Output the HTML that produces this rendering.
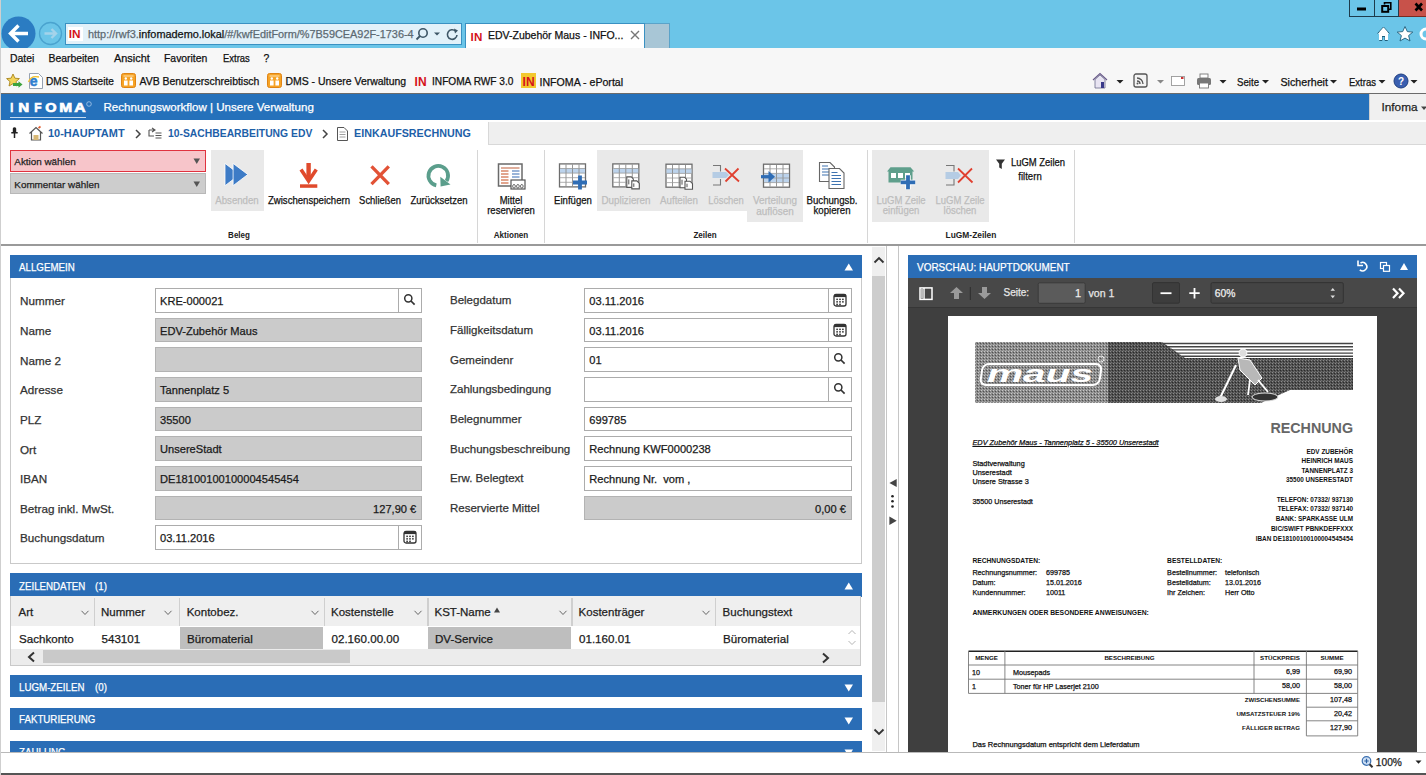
<!DOCTYPE html>
<html><head><meta charset="utf-8">
<style>
*{box-sizing:border-box;margin:0;padding:0}
html,body{width:1426px;height:775px;overflow:hidden;background:#fff}
body{position:relative;font-family:"Liberation Sans",sans-serif;color:#222}
.a{position:absolute}
.t{position:absolute;white-space:nowrap;line-height:1;-webkit-text-stroke:0.25px currentColor}
.t[style*="bold"]{-webkit-text-stroke:0}
svg{position:absolute;overflow:visible}
</style></head><body>

<!-- TITLE BAR -->
<div class="a" style="left:0;top:0;width:1426px;height:48px;background:#6bc5e8"></div>
<svg style="left:0;top:0" width="90" height="48">
  <clipPath id="cb"><rect x="0" y="0" width="90" height="48"/></clipPath>
  <g clip-path="url(#cb)">
  <circle cx="18.5" cy="33.5" r="17" fill="#2b7cc2"/>
  <path d="M11 33.5 H28 M18.5 25.5 L10.5 33.5 L18.5 41.5" stroke="#fff" stroke-width="3.4" fill="none" stroke-linejoin="miter"/>
  <circle cx="50.5" cy="33.5" r="11" fill="none" stroke="#4aa3cf" stroke-width="1.3"/>
  <path d="M44.5 33.5 H56 M51.5 29 L56 33.5 L51.5 38" stroke="#a4d3ea" stroke-width="2.4" fill="none"/>
  </g>
</svg>
<div class="a" style="left:65px;top:23px;width:397px;height:22px;background:#e2f1f9;border:1px solid #3a91c2"></div>
<div class="a" style="left:68px;top:27px;width:15px;height:14px;background:#fff"></div>
<div class="t" style="left:68.8px;top:29px;font-size:11.8px;font-weight:bold;color:#d5121a;letter-spacing:0px">IN</div>
<div class="t" style="left:88px;top:29px;font-size:10.9px;color:#5d6a72">http://rwf3.<span style="color:#111">infomademo.lokal</span>/#/kwfEditForm/%7B59CEA92F-1736-4</div>
<svg style="left:415px;top:27px" width="46" height="16">
  <circle cx="8" cy="6" r="4.2" fill="none" stroke="#3d5666" stroke-width="1.6"/>
  <path d="M5 9 L1.5 12.5" stroke="#3d5666" stroke-width="1.8"/>
  <path d="M19 5.5 L25 5.5 L22 8.5 Z" fill="#3d5666"/>
  <path d="M40.5 4 A4.8 4.8 0 1 0 42 8" stroke="#3d5666" stroke-width="1.6" fill="none"/>
  <path d="M39 1.5 L43 3.5 L40 6.5 Z" fill="#3d5666"/>
</svg>
<div class="a" style="left:465px;top:23px;width:180px;height:25px;background:#fff;border:1px solid #3a91c2;border-bottom:none"></div>
<div class="a" style="left:645px;top:23px;width:25px;height:25px;background:#a8c6d6;border:1px solid #5aa3c9;border-bottom:none;border-left:none"></div>
<div class="t" style="left:470.5px;top:30.5px;font-size:11.6px;font-weight:bold;color:#d5121a;letter-spacing:0.2px">IN</div>
<div class="t" style="left:488px;top:30px;font-size:10.5px;color:#111">EDV-Zubehör Maus - INFO...</div>
<svg style="left:630px;top:30px" width="10" height="10"><path d="M1 1 L9 9 M9 1 L1 9" stroke="#777" stroke-width="1.4"/></svg>
<!-- window buttons -->
<div class="a" style="left:1349px;top:0;width:50px;height:17px;border:1px solid #1d3b4c;border-top:none;background:#6bc5e8"></div>
<div class="a" style="left:1374px;top:0;width:1px;height:16px;background:#1d3b4c"></div>
<div class="a" style="left:1399px;top:0;width:27px;height:17px;background:#c8524a;border-bottom:1px solid #7a2a20"></div>
<svg style="left:1349px;top:0" width="77" height="17">
  <rect x="8" y="7.5" width="9" height="3" fill="#000"/>
  <path d="M35.5 4.5 V2.8 H41.8 V9.2 H39.5" stroke="#000" stroke-width="1.6" fill="none"/>
  <rect x="33.2" y="6" width="6" height="5.8" fill="none" stroke="#000" stroke-width="2"/>
  <path d="M66.5 3.5 L73 10.5 M73 3.5 L66.5 10.5" stroke="#000" stroke-width="2.6"/>
</svg>
<svg style="left:1375px;top:25px" width="51" height="18">
  <path d="M2.5 8.5 L8.5 2 L14.5 8.5 M4.5 7 V15.5 H7 V11.5 H10 V15.5 H12.5 V7" fill="#fff" stroke="#1f5d7a" stroke-width="1"/>
  <path d="M8.5 2.5 L4 7.5 V15 H7 V11 H10 V15 H13 V7.5 Z" fill="#fff"/>
  <path d="M30 1.5 L32.3 6.6 L37.8 7.1 L33.6 10.6 L35 16 L30 13.1 L25 16 L26.4 10.6 L22.2 7.1 L27.7 6.6 Z" fill="#fff" stroke="#1f5d7a" stroke-width="0.9"/>
  <circle cx="51" cy="9" r="5" fill="none" stroke="#fff" stroke-width="3"/>
</svg>
<div class="a" style="left:0;top:0;width:1px;height:775px;background:#cfcfcf;z-index:50"></div>

<!-- MENU + FAVORITES -->
<div class="a" style="left:0;top:48px;width:1426px;height:45px;background:#f7f7f7"></div>
<div class="a" style="left:0;top:93px;width:1426px;height:1px;background:#6b6b6b"></div>
<div class="t" style="left:10px;top:54px;font-size:10.4px;color:#111">Datei</div>
<div class="t" style="left:48.5px;top:54px;font-size:10.4px;color:#111">Bearbeiten</div>
<div class="t" style="left:113.5px;top:53px;font-size:10.5px;color:#111;transform:scaleX(1.04);transform-origin:0 0">Ansicht</div>
<div class="t" style="left:164px;top:54px;font-size:10.4px;color:#111">Favoriten</div>
<div class="t" style="left:222.5px;top:53px;font-size:10.5px;color:#111;transform:scaleX(0.90);transform-origin:0 0">Extras</div>
<div class="t" style="left:263.5px;top:54px;font-size:10.4px;color:#111">?</div>
<!-- favorites -->
<svg style="left:5px;top:72px" width="20" height="18">
  <path d="M8 2 L9.9 6.2 L14.4 6.6 L11 9.6 L12 14 L8 11.7 L4 14 L5 9.6 L1.6 6.6 L6.1 6.2 Z" fill="#f3d45a" stroke="#a8841c" stroke-width="0.9"/>
  <path d="M8 12.5 H14.5" stroke="#3ea33e" stroke-width="3"/><path d="M13.5 9.3 L17.5 12.5 L13.5 15.7 Z" fill="#3ea33e"/>
</svg>
<svg style="left:28px;top:73px" width="16" height="17">
  <path d="M1.5 0.5 H10.5 L14.5 4.5 V15.5 H1.5 Z" fill="#fff" stroke="#8a96a8" stroke-width="0.9"/>
  <text x="1.8" y="12.8" font-family="Liberation Sans" font-weight="bold" font-size="14" fill="#2f7fd0" stroke="#2f7fd0" stroke-width="0.5">e</text>
  <path d="M0.5 9 Q3 2 11 4" stroke="#f2c12e" stroke-width="1.3" fill="none"/>
</svg>
<div class="t" style="left:46px;top:76.5px;font-size:10.1px;color:#111">DMS Startseite</div>
<svg style="left:121px;top:73px" width="16" height="16">
  <rect x="0.5" y="0.5" width="14" height="14" rx="2" fill="#f6a326" stroke="#e08414" stroke-width="1"/>
  <rect x="2.5" y="2.5" width="10" height="1" fill="#fde2b0"/>
  <circle cx="4.8" cy="5.5" r="1.2" fill="#fff"/><circle cx="10.2" cy="5.5" r="1.2" fill="#fff"/>
  <rect x="3" y="7.5" width="3.6" height="5" fill="#fff"/><rect x="8.4" y="7.5" width="3.6" height="5" fill="#fff"/>
</svg>
<div class="t" style="left:139.5px;top:76.5px;font-size:10.45px;color:#111">AVB Benutzerschreibtisch</div>
<svg style="left:267px;top:73px" width="16" height="16">
  <rect x="0.5" y="0.5" width="14" height="14" rx="2" fill="#f6a326" stroke="#e08414" stroke-width="1"/>
  <rect x="2.5" y="2.5" width="10" height="1" fill="#fde2b0"/>
  <circle cx="4.8" cy="5.5" r="1.2" fill="#fff"/><circle cx="10.2" cy="5.5" r="1.2" fill="#fff"/>
  <rect x="3" y="7.5" width="3.6" height="5" fill="#fff"/><rect x="8.4" y="7.5" width="3.6" height="5" fill="#fff"/>
</svg>
<div class="t" style="left:285.5px;top:76.5px;font-size:10.45px;color:#111">DMS - Unsere Verwaltung</div>
<div class="t" style="left:414.5px;top:76px;font-size:12px;font-weight:bold;color:#d5121a;letter-spacing:0.2px">IN</div>
<div class="t" style="left:432px;top:76.5px;font-size:10.13px;color:#111">INFOMA RWF 3.0</div>
<div class="a" style="left:521px;top:73px;width:15px;height:15px;background:#f3c82e"></div>
<div class="t" style="left:522.5px;top:76px;font-size:12px;font-weight:bold;color:#d5121a;letter-spacing:0.2px">IN</div>
<div class="t" style="left:539.5px;top:76.5px;font-size:10.6px;color:#111">INFOMA - ePortal</div>
<!-- right command bar -->
<svg style="left:1092px;top:72px" width="330" height="18">
  <path d="M1 8 L8 1.5 L15 8" fill="none" stroke="#6a5a8a" stroke-width="1.2"/>
  <path d="M3 7.5 V16 H13 V7.5 L8 3 Z" fill="#e8e4f2" stroke="#6a6a8a" stroke-width="0.8"/>
  <rect x="9" y="10" width="3" height="6" fill="#3a3a8a"/>
  <path d="M24.5 8 H31.5 L28 11.5 Z" fill="#222"/>
  <rect x="42" y="2" width="13" height="13" rx="2" fill="#f3f3f3" stroke="#555" stroke-width="1.3"/>
  <path d="M45 6 A6 6 0 0 1 51 12 M45 9 A3 3 0 0 1 48 12" stroke="#555" stroke-width="1.3" fill="none"/><circle cx="45.5" cy="11.5" r="1" fill="#555"/>
  <path d="M65 8 H72 L68.5 11.5 Z" fill="#888"/>
  <rect x="79.5" y="4.5" width="13" height="9" fill="#fff" stroke="#999" stroke-width="0.9"/>
  <rect x="89" y="5" width="2.5" height="2" fill="#c33"/>
  <rect x="105" y="6" width="14" height="7" rx="1.5" fill="#777"/>
  <rect x="108" y="2" width="8" height="4" fill="#fff" stroke="#777" stroke-width="0.9"/>
  <rect x="107.5" y="11" width="9" height="5" fill="#fff" stroke="#777" stroke-width="0.9"/>
  <path d="M127.5 8 H134.5 L131 11.5 Z" fill="#222"/>
  <path d="M170 8 H177 L173.5 11.5 Z" fill="#222"/>
  <path d="M238 8 H245 L241.5 11.5 Z" fill="#222"/>
  <path d="M286.5 8 H293.5 L290 11.5 Z" fill="#222"/>
  <circle cx="309" cy="9" r="7" fill="#3a5fb0" stroke="#1f3f80" stroke-width="1"/>
  <text x="309" y="13" font-family="Liberation Sans" font-weight="bold" font-size="10" fill="#fff" text-anchor="middle">?</text>
  <path d="M318.5 8 H325.5 L322 11.5 Z" fill="#222"/>
</svg>
<div class="t" style="left:1237px;top:76.5px;font-size:10.5px;color:#111;transform:scaleX(0.92);transform-origin:0 0">Seite</div>
<div class="t" style="left:1280.5px;top:76.5px;font-size:10.66px;color:#111">Sicherheit</div>
<div class="t" style="left:1349px;top:76.5px;font-size:10.5px;color:#111;transform:scaleX(0.906);transform-origin:0 0">Extras</div>

<!-- APP HEADER -->
<div class="a" style="left:0;top:94px;width:1426px;height:26px;background:#2571bb"></div>
<svg style="left:0;top:94px" width="100" height="26"><text x="10.35" y="18.4" font-family="Liberation Sans" font-weight="bold" font-size="13" fill="#fff" stroke="#fff" stroke-width="0.7" textLength="3.0" lengthAdjust="spacingAndGlyphs">I</text><text x="18.25" y="18.4" font-family="Liberation Sans" font-weight="bold" font-size="13" fill="#fff" stroke="#fff" stroke-width="0.7" textLength="10.9" lengthAdjust="spacingAndGlyphs">N</text><text x="34.35" y="18.4" font-family="Liberation Sans" font-weight="bold" font-size="13" fill="#fff" stroke="#fff" stroke-width="0.7" textLength="7.3" lengthAdjust="spacingAndGlyphs">F</text><text x="45.35" y="18.4" font-family="Liberation Sans" font-weight="bold" font-size="13" fill="#fff" stroke="#fff" stroke-width="0.7" textLength="11.3" lengthAdjust="spacingAndGlyphs">O</text><text x="59.35" y="18.4" font-family="Liberation Sans" font-weight="bold" font-size="13" fill="#fff" stroke="#fff" stroke-width="0.7" textLength="12.9" lengthAdjust="spacingAndGlyphs">M</text><text x="74.35" y="18.4" font-family="Liberation Sans" font-weight="bold" font-size="13" fill="#fff" stroke="#fff" stroke-width="0.7" textLength="11.3" lengthAdjust="spacingAndGlyphs">A</text></svg>
<div class="a" style="left:10px;top:116.5px;width:76px;height:1.5px;background:#c5dbf0"></div>
<svg style="left:86px;top:101px" width="7" height="7"><circle cx="3" cy="3" r="2.3" fill="none" stroke="#a8c8ea" stroke-width="0.8"/></svg>
<div class="t" style="left:103.5px;top:102px;font-size:11.55px;color:#fff">Rechnungsworkflow | Unsere Verwaltung</div>
<div class="a" style="left:1369px;top:94px;width:57px;height:27px;background:#f0f0f0;border-left:1px solid #d0d0d0"></div>
<div class="t" style="left:1381.5px;top:102px;font-size:11.8px;color:#222">Infoma</div>
<svg style="left:1421px;top:106px" width="6" height="5"><path d="M0 0.5 H6 L3 4 Z" fill="#444"/></svg>

<!-- BREADCRUMB -->
<div class="a" style="left:0;top:120px;width:1426px;height:25px;background:#fff"></div>
<div class="a" style="left:488px;top:122px;width:938px;height:23px;background:#efefef;border-left:1px solid #d8d8d8;border-bottom:1px solid #d8d8d8"></div>
<svg style="left:9px;top:126px" width="480" height="16">
  <path d="M3.8 2.5 A1.8 1.8 0 0 1 7.2 2.5 V6 H3.8 Z" fill="#222"/><path d="M2.3 6.8 H8.7 M5.5 6.8 V12" stroke="#222" stroke-width="1.5" fill="none"/>
  <path d="M20.5 7.5 L27 1.5 L33.5 7.5 M22.5 6 V14 H31.5 V6" fill="none" stroke="#555" stroke-width="1.2"/>
  <rect x="24.5" y="9" width="5" height="5" fill="#d8b875"/>
  <path d="M29.5 2 L31.5 0.5" stroke="#e05a2a" stroke-width="1.6"/>
  <path d="M127 4 L131 8 L127 12" stroke="#444" stroke-width="1.5" fill="none"/>
  <path d="M140 4 H146 M140 4 V10 H145 M143 2 L146 4 L143 6" stroke="#555" stroke-width="1.1" fill="none"/>
  <path d="M146.5 7 H152.5 M146.5 9.5 H152.5 M146.5 12 H152.5" stroke="#555" stroke-width="1.1"/>
  <path d="M314 4 L318 8 L314 12" stroke="#444" stroke-width="1.5" fill="none"/>
  <path d="M328.5 1.5 H335 L338.5 5 V14.5 H328.5 Z" fill="#fff" stroke="#555" stroke-width="1"/>
  <path d="M330.5 6 H336.5 M330.5 8.5 H336.5 M330.5 11 H336.5" stroke="#888" stroke-width="0.8"/>
</svg>
<div class="t" style="left:48.4px;top:128.1px;font-size:11.8px;font-weight:bold;color:#1d60a8;transform:scaleX(0.93);transform-origin:0 0">10-HAUPTAMT</div>
<div class="t" style="left:167.6px;top:128.1px;font-size:11.8px;font-weight:bold;color:#1d60a8;transform:scaleX(0.877);transform-origin:0 0">10-SACHBEARBEITUNG EDV</div>
<div class="t" style="left:354px;top:128.1px;font-size:11.8px;font-weight:bold;color:#1d60a8;transform:scaleX(0.91);transform-origin:0 0">EINKAUFSRECHNUNG</div>

<!-- RIBBON -->
<div class="a" style="left:0;top:145px;width:1426px;height:100px;background:#fff"></div>
<div class="a" style="left:0;top:244px;width:1426px;height:2px;background:#9a9a9a"></div>
<div class="a" style="left:10px;top:150px;width:196px;height:22px;background:#f7c5ca;border:1px solid #e0333f"></div>
<div class="t" style="left:14.3px;top:157px;font-size:9.9px;color:#222">Aktion wählen</div>
<svg style="left:193px;top:158px" width="8" height="7"><path d="M0.5 0.5 H7 L3.75 6 Z" fill="#555"/></svg>
<div class="a" style="left:10px;top:173px;width:196px;height:21px;background:#cdcdcd;border:1px solid #b8b8b8"></div>
<div class="t" style="left:14.3px;top:179.5px;font-size:9.9px;color:#222">Kommentar wählen</div>
<svg style="left:193px;top:180.5px" width="8" height="7"><path d="M0.5 0.5 H7 L3.75 6 Z" fill="#555"/></svg>

<div class="a" style="left:211px;top:150px;width:53px;height:61px;background:#e9e9e9"></div>
<div class="a" style="left:597px;top:150px;width:150px;height:61px;background:#e9e9e9"></div>
<div class="a" style="left:747px;top:150px;width:56px;height:72px;background:#e9e9e9"></div>
<div class="a" style="left:872px;top:150px;width:117px;height:72px;background:#e9e9e9"></div>
<div class="a" style="left:477px;top:150px;width:1px;height:93px;background:#d6d6d6"></div>
<div class="a" style="left:544px;top:150px;width:1px;height:93px;background:#d6d6d6"></div>
<div class="a" style="left:867px;top:150px;width:1px;height:93px;background:#d6d6d6"></div>
<div class="a" style="left:1074px;top:150px;width:1px;height:93px;background:#d6d6d6"></div>

<svg style="left:0;top:0" width="1100" height="245">
  <path d="M225 163.4 V185.7 L239.7 174.5 Z" fill="#3d7bc6" stroke="#fff" stroke-width="0.8"/>
  <path d="M233.1 163.4 V185.7 L247.8 174.5 Z" fill="#3d7bc6" stroke="#fff" stroke-width="0.8"/>
  <path d="M308.6 163 V180" stroke="#e04a2c" stroke-width="4.4"/>
  <path d="M301 169.5 L308.6 181 L316.3 169.5" stroke="#e04a2c" stroke-width="3.6" fill="none"/>
  <rect x="300" y="184.3" width="17.3" height="3.5" fill="#e04a2c"/>
  <path d="M371.5 166.3 L388.8 184.2 M388.8 166.3 L371.5 184.2" stroke="#e25236" stroke-width="3.3"/>
  <path d="M436.3 185.3 A9.8 9.8 0 1 1 446.5 181" stroke="#5b9e8c" stroke-width="3.8" fill="none"/>
  <path d="M440.3 176.7 L440.6 186.6 L450.5 184.6 Z" fill="#5b9e8c"/>
  <rect x="498.5" y="164" width="23.5" height="22" fill="#fff" stroke="#6a6a6a" stroke-width="1.5"/>
  <path d="M501 168 H519.5" stroke="#d08a70" stroke-width="1.4"/>
  <path d="M501 171 H508.5 M501 174 H508.5 M501 177 H508.5 M501 180 H508.5 M501 183 H508.5" stroke="#d9886a" stroke-width="1.6"/>
  <path d="M512 171 H519.5 M512 174 H519.5 M512 177 H519.5" stroke="#7a9ccc" stroke-width="1.6"/>
  <rect x="511" y="180" width="14" height="9" fill="#fff" stroke="#555" stroke-width="1.2"/>
  <path d="M514 184.5 a1.3 1.8 0 1 0 0.01 0 M517.9 184.5 a1.3 1.8 0 1 0 0.01 0 M521.8 184.5 a1.3 1.8 0 1 0 0.01 0" stroke="#444" stroke-width="0.9" fill="none"/>
  <g transform="translate(559,163.4)"><rect x="0.5" y="0.5" width="26" height="23" fill="#fff" stroke="#6d6d6d" stroke-width="1.3"/><rect x="1" y="5.1" width="25" height="4.6" fill="#bcd3ec"/><path d="M7.0 1 V23" stroke="#8a8a8a" stroke-width="0.9"/><path d="M13.5 1 V23" stroke="#8a8a8a" stroke-width="0.9"/><path d="M20.0 1 V23" stroke="#8a8a8a" stroke-width="0.9"/><path d="M1 5.1 H26" stroke="#9a9a9a" stroke-width="0.8"/><path d="M1 9.7 H26" stroke="#9a9a9a" stroke-width="0.8"/><path d="M1 14.3 H26" stroke="#9a9a9a" stroke-width="0.8"/><path d="M1 18.9 H26" stroke="#9a9a9a" stroke-width="0.8"/></g>
  <path d="M573 182.5 H587 M580 175.5 V189.5" stroke="#2f6db5" stroke-width="3.8"/>
  <g transform="translate(612.3,163.4)"><rect x="0.5" y="0.5" width="26" height="23" fill="#fff" stroke="#6d6d6d" stroke-width="1.3"/><rect x="1" y="5.1" width="25" height="4.6" fill="#bcd3ec"/><path d="M7.0 1 V23" stroke="#8a8a8a" stroke-width="0.9"/><path d="M13.5 1 V23" stroke="#8a8a8a" stroke-width="0.9"/><path d="M20.0 1 V23" stroke="#8a8a8a" stroke-width="0.9"/><path d="M1 5.1 H26" stroke="#9a9a9a" stroke-width="0.8"/><path d="M1 9.7 H26" stroke="#9a9a9a" stroke-width="0.8"/><path d="M1 14.3 H26" stroke="#9a9a9a" stroke-width="0.8"/><path d="M1 18.9 H26" stroke="#9a9a9a" stroke-width="0.8"/><path d="M14.5 13.5 H19 L21 15.5 V24 H14.5 Z" fill="#fff" stroke="#555" stroke-width="1.1"/><path d="M19.5 17.5 H24.5 L27 20 V25.5 H19.5 Z" fill="#fff" stroke="#555" stroke-width="1.1"/><path d="M16.5 16 V21 M21.5 20 V23.5" stroke="#555" stroke-width="1"/></g>
  <g transform="translate(665.5,163.7)"><rect x="0.5" y="0.5" width="26" height="23" fill="#fff" stroke="#6d6d6d" stroke-width="1.3"/><rect x="1" y="5.1" width="25" height="4.6" fill="#bcd3ec"/><path d="M7.0 1 V23" stroke="#8a8a8a" stroke-width="0.9"/><path d="M13.5 1 V23" stroke="#8a8a8a" stroke-width="0.9"/><path d="M20.0 1 V23" stroke="#8a8a8a" stroke-width="0.9"/><path d="M1 5.1 H26" stroke="#9a9a9a" stroke-width="0.8"/><path d="M1 9.7 H26" stroke="#9a9a9a" stroke-width="0.8"/><path d="M1 14.3 H26" stroke="#9a9a9a" stroke-width="0.8"/><path d="M1 18.9 H26" stroke="#9a9a9a" stroke-width="0.8"/><path d="M14.5 13.5 H19 L21 15.5 V24 H14.5 Z" fill="#fff" stroke="#555" stroke-width="1.1"/><path d="M19.5 17.5 H24.5 L27 20 V25.5 H19.5 Z" fill="#fff" stroke="#555" stroke-width="1.1"/><path d="M16.5 16 V21 M21.5 20 V23.5" stroke="#555" stroke-width="1"/></g>
  <path d="M713 165.5 H720.5 V171.5 M713 185 H720.5 V179" stroke="#777" stroke-width="1.1" fill="none"/>
  <path d="M712.5 172 H726 L729 175 L726 178 H712.5 Z" fill="#b5cce4"/>
  <path d="M725 168.5 L739 181.5 M738.5 168.5 L725.5 181.5" stroke="#e04030" stroke-width="1.8"/>
  <g transform="translate(763,163.7)"><rect x="0.5" y="0.5" width="26" height="23" fill="#fff" stroke="#6d6d6d" stroke-width="1.3"/><rect x="1" y="9.7" width="25" height="4.6" fill="#bcd3ec"/><rect x="1" y="14.3" width="25" height="4.6" fill="#bcd3ec"/><path d="M7.0 1 V23" stroke="#8a8a8a" stroke-width="0.9"/><path d="M13.5 1 V23" stroke="#8a8a8a" stroke-width="0.9"/><path d="M20.0 1 V23" stroke="#8a8a8a" stroke-width="0.9"/><path d="M1 5.1 H26" stroke="#9a9a9a" stroke-width="0.8"/><path d="M1 9.7 H26" stroke="#9a9a9a" stroke-width="0.8"/><path d="M1 14.3 H26" stroke="#9a9a9a" stroke-width="0.8"/><path d="M1 18.9 H26" stroke="#9a9a9a" stroke-width="0.8"/></g>
  <path d="M761 176.7 H770" stroke="#2f6db5" stroke-width="3.2"/><path d="M768.5 171 L775 176.7 L768.5 182.4 Z" fill="#2f6db5"/>
  <path d="M819.5 162.5 H830 L834.5 167 V181.5 H819.5 Z" fill="#fff" stroke="#666" stroke-width="1.1"/>
  <path d="M822 166 H828 M822 169 H831 M822 172 H831 M822 175 H831" stroke="#3e73b0" stroke-width="1.1"/>
  <path d="M829 168.5 H839.5 L844 173 V188.5 H829 Z" fill="#fff" stroke="#666" stroke-width="1.1"/>
  <path d="M831.5 172.5 H837.5 M831.5 175.5 H841 M831.5 178.5 H841 M831.5 181.5 H841 M831.5 184.5 H841" stroke="#3e73b0" stroke-width="1.1"/>
  <path d="M887 171.5 L890.5 167.3 H910.5 L914.2 171.5 Z" fill="#5f9f8c"/><rect x="888.5" y="171" width="24" height="11.5" fill="#5f9f8c"/>
  <rect x="891" y="173" width="5" height="5" fill="#fff"/><rect x="898" y="173" width="5" height="5" fill="#fff"/><rect x="905" y="173" width="5" height="5" fill="#fff"/>
  <path d="M900.7 182.4 H915.2 M908 175.3 V189.3" stroke="#fff" stroke-width="5.5"/>
  <path d="M900.7 182.4 H915.2 M908 175.3 V189.3" stroke="#2f6db5" stroke-width="3.8"/>
  <path d="M946 165.5 H954 V171.5 M946 185 H954 V179" stroke="#777" stroke-width="1.1" fill="none"/>
  <path d="M945.5 172 H958 L961 175.5 L958 179 H945.5 Z" fill="#b5cce4"/>
  <path d="M958 168.5 L972.5 182.5 M972 168.5 L958 182.5" stroke="#e04030" stroke-width="1.8"/>
  <path d="M996 159.5 H1005 L1001.8 163.8 V169 L999.2 167.5 V163.8 Z" fill="#333"/>
</svg>
<div class="t" style="left:137.3px;width:200px;text-align:center;top:196.03px;font-size:10.2px;color:#bdbdbd;font-weight:normal;transform:scaleX(0.945)">Absenden</div>
<div class="t" style="left:208.9px;width:200px;text-align:center;top:196.00px;font-size:10.2px;color:#111;font-weight:normal;transform:scaleX(0.942)">Zwischenspeichern</div>
<div class="t" style="left:280.3px;width:200px;text-align:center;top:195.82px;font-size:10.2px;color:#111;font-weight:normal;transform:scaleX(0.922)">Schließen</div>
<div class="t" style="left:339.0px;width:200px;text-align:center;top:195.95px;font-size:10.2px;color:#111;font-weight:normal;transform:scaleX(0.936)">Zurücksetzen</div>
<div class="t" style="left:139.4px;width:200px;text-align:center;top:231.25px;font-size:8.8px;color:#222;font-weight:bold;transform:scaleX(0.909)">Beleg</div>
<div class="t" style="left:410.5px;width:200px;text-align:center;top:195.82px;font-size:10.2px;color:#111;font-weight:normal;transform:scaleX(0.922)">Mittel</div>
<div class="t" style="left:410.5px;width:200px;text-align:center;top:206.24px;font-size:10.2px;color:#111;font-weight:normal;transform:scaleX(0.935)">reservieren</div>
<div class="t" style="left:410.8px;width:200px;text-align:center;top:231.25px;font-size:8.8px;color:#222;font-weight:bold;transform:scaleX(0.916)">Aktionen</div>
<div class="t" style="left:472.9px;width:200px;text-align:center;top:195.98px;font-size:10.2px;color:#111;font-weight:normal;transform:scaleX(0.939)">Einfügen</div>
<div class="t" style="left:525.5px;width:200px;text-align:center;top:196.16px;font-size:10.2px;color:#bdbdbd;font-weight:normal;transform:scaleX(0.961)">Duplizieren</div>
<div class="t" style="left:579.0px;width:200px;text-align:center;top:196.13px;font-size:10.2px;color:#bdbdbd;font-weight:normal;transform:scaleX(0.957)">Aufteilen</div>
<div class="t" style="left:625.5px;width:200px;text-align:center;top:195.82px;font-size:10.2px;color:#bdbdbd;font-weight:normal;transform:scaleX(0.922)">Löschen</div>
<div class="t" style="left:675.0px;width:200px;text-align:center;top:196.25px;font-size:10.2px;color:#bdbdbd;font-weight:normal;transform:scaleX(0.971)">Verteilung</div>
<div class="t" style="left:675.0px;width:200px;text-align:center;top:206.55px;font-size:10.2px;color:#bdbdbd;font-weight:normal;transform:scaleX(0.971)">auflösen</div>
<div class="t" style="left:732.3px;width:200px;text-align:center;top:196.04px;font-size:10.2px;color:#111;font-weight:normal;transform:scaleX(0.947)">Buchungsb.</div>
<div class="t" style="left:732.3px;width:200px;text-align:center;top:206.34px;font-size:10.2px;color:#111;font-weight:normal;transform:scaleX(0.947)">kopieren</div>
<div class="t" style="left:605.4px;width:200px;text-align:center;top:231.25px;font-size:8.8px;color:#222;font-weight:bold;transform:scaleX(0.912)">Zeilen</div>
<div class="t" style="left:800.6px;width:200px;text-align:center;top:195.94px;font-size:10.2px;color:#bdbdbd;font-weight:normal;transform:scaleX(0.935)">LuGM Zeile</div>
<div class="t" style="left:800.6px;width:200px;text-align:center;top:206.24px;font-size:10.2px;color:#bdbdbd;font-weight:normal;transform:scaleX(0.935)">einfügen</div>
<div class="t" style="left:859.5px;width:200px;text-align:center;top:195.94px;font-size:10.2px;color:#bdbdbd;font-weight:normal;transform:scaleX(0.935)">LuGM Zeile</div>
<div class="t" style="left:859.5px;width:200px;text-align:center;top:206.24px;font-size:10.2px;color:#bdbdbd;font-weight:normal;transform:scaleX(0.935)">löschen</div>
<div class="t" style="left:938.0px;width:200px;text-align:center;top:157.68px;font-size:10.2px;color:#111;font-weight:normal;transform:scaleX(0.928)">LuGM Zeilen</div>
<div class="t" style="left:929.7px;width:200px;text-align:center;top:172.29px;font-size:10.2px;color:#111;font-weight:normal;transform:scaleX(0.941)">filtern</div>
<div class="t" style="left:871.0px;width:200px;text-align:center;top:231.25px;font-size:8.8px;color:#222;font-weight:bold;transform:scaleX(0.953)">LuGM-Zeilen</div>

<!-- CONTENT -->
<div class="a" style="left:0;top:246px;width:1426px;height:506px;background:#fff"></div>
<div class="a" style="left:10px;top:254.6px;width:852px;height:23.3px;background:#2a6db6"></div>
<div class="t" style="left:19px;top:262.0px;font-size:11px;color:#fff;transform:scaleX(0.885);transform-origin:0 0">ALLGEMEIN</div>
<svg style="left:843.5px;top:262.9px" width="10" height="8"><path d="M0.5 7.5 L4.75 0.5 L9 7.5 Z" fill="#fff"/></svg>
<div class="a" style="left:10px;top:277.9px;width:852px;height:286px;border:1px solid #c9c9c9;border-top:none;background:#fff"></div>
<div class="t" style="left:20px;top:295.2px;font-size:11.7px;color:#333">Nummer</div>
<div class="a" style="left:155px;top:288px;width:267.3px;height:24.5px;background:#fff;border:1px solid #acacac"></div>
<div class="a" style="left:398.3px;top:288px;width:1px;height:24.5px;background:#acacac"></div>
<svg style="left:403.3px;top:292.5px" width="14" height="14"><circle cx="5.3" cy="5.3" r="3.6" fill="none" stroke="#333" stroke-width="1.5"/><path d="M8 8 L11.6 11.6" stroke="#333" stroke-width="1.7"/></svg>
<div class="t" style="left:160px;top:295.9px;font-size:11.1px;color:#1a1a1a">KRE-000021</div>
<div class="t" style="left:20px;top:325.0px;font-size:11.7px;color:#333">Name</div>
<div class="a" style="left:155px;top:317.8px;width:267.3px;height:24.5px;background:#cbcbcb;border:1px solid #b3b3b3"></div>
<div class="t" style="left:160px;top:325.7px;font-size:11.1px;color:#1a1a1a">EDV-Zubehör Maus</div>
<div class="t" style="left:20px;top:354.59999999999997px;font-size:11.7px;color:#333">Name 2</div>
<div class="a" style="left:155px;top:347.4px;width:267.3px;height:24.5px;background:#cbcbcb;border:1px solid #b3b3b3"></div>
<div class="t" style="left:20px;top:384.3px;font-size:11.7px;color:#333">Adresse</div>
<div class="a" style="left:155px;top:377.1px;width:267.3px;height:24.5px;background:#cbcbcb;border:1px solid #b3b3b3"></div>
<div class="t" style="left:160px;top:385.0px;font-size:11.1px;color:#1a1a1a">Tannenplatz 5</div>
<div class="t" style="left:20px;top:414.0px;font-size:11.7px;color:#333">PLZ</div>
<div class="a" style="left:155px;top:406.8px;width:267.3px;height:24.5px;background:#cbcbcb;border:1px solid #b3b3b3"></div>
<div class="t" style="left:160px;top:414.7px;font-size:11.1px;color:#1a1a1a">35500</div>
<div class="t" style="left:20px;top:443.59999999999997px;font-size:11.7px;color:#333">Ort</div>
<div class="a" style="left:155px;top:436.4px;width:267.3px;height:24.5px;background:#cbcbcb;border:1px solid #b3b3b3"></div>
<div class="t" style="left:160px;top:444.29999999999995px;font-size:11.1px;color:#1a1a1a">UnsereStadt</div>
<div class="t" style="left:20px;top:473.2px;font-size:11.7px;color:#333">IBAN</div>
<div class="a" style="left:155px;top:466px;width:267.3px;height:24.5px;background:#cbcbcb;border:1px solid #b3b3b3"></div>
<div class="t" style="left:160px;top:473.9px;font-size:11.1px;color:#1a1a1a">DE18100100100004545454</div>
<div class="t" style="left:20px;top:502.8px;font-size:11.7px;color:#333">Betrag inkl. MwSt.</div>
<div class="a" style="left:155px;top:495.6px;width:267.3px;height:24.5px;background:#cbcbcb;border:1px solid #b3b3b3"></div>
<div class="t" style="left:155px;width:261.3px;text-align:right;top:503.5px;font-size:11.1px;color:#1a1a1a">127,90 €</div>
<div class="t" style="left:20px;top:532.4000000000001px;font-size:11.7px;color:#333">Buchungsdatum</div>
<div class="a" style="left:155px;top:525.2px;width:267.3px;height:24.5px;background:#fff;border:1px solid #acacac"></div>
<div class="a" style="left:398.3px;top:525.2px;width:1px;height:24.5px;background:#acacac"></div>
<svg style="left:403.3px;top:530.2px" width="14" height="14"><rect x="1" y="1.5" width="12" height="11.5" rx="2" fill="#fff" stroke="#333" stroke-width="1.3"/><rect x="1" y="1.5" width="12" height="2.6" fill="#333"/><rect x="3.3" y="5.6" width="1.6" height="1.5" fill="#333"/><rect x="6.2" y="5.6" width="1.6" height="1.5" fill="#333"/><rect x="9.1" y="5.6" width="1.6" height="1.5" fill="#333"/><rect x="3.3" y="8.1" width="1.6" height="1.5" fill="#333"/><rect x="6.2" y="8.1" width="1.6" height="1.5" fill="#333"/><rect x="9.1" y="8.1" width="1.6" height="1.5" fill="#333"/><rect x="3.3" y="10.6" width="1.6" height="1.5" fill="#333"/><rect x="6.2" y="10.6" width="1.6" height="1.5" fill="#333"/></svg>
<div class="t" style="left:160px;top:533.1px;font-size:11.1px;color:#1a1a1a">03.11.2016</div>
<div class="t" style="left:450px;top:295.2px;font-size:11.5px;color:#333">Belegdatum</div>
<div class="a" style="left:584.3px;top:288px;width:267.6px;height:24.5px;background:#fff;border:1px solid #acacac"></div>
<div class="a" style="left:827.9px;top:288px;width:1px;height:24.5px;background:#acacac"></div>
<svg style="left:832.9px;top:293px" width="14" height="14"><rect x="1" y="1.5" width="12" height="11.5" rx="2" fill="#fff" stroke="#333" stroke-width="1.3"/><rect x="1" y="1.5" width="12" height="2.6" fill="#333"/><rect x="3.3" y="5.6" width="1.6" height="1.5" fill="#333"/><rect x="6.2" y="5.6" width="1.6" height="1.5" fill="#333"/><rect x="9.1" y="5.6" width="1.6" height="1.5" fill="#333"/><rect x="3.3" y="8.1" width="1.6" height="1.5" fill="#333"/><rect x="6.2" y="8.1" width="1.6" height="1.5" fill="#333"/><rect x="9.1" y="8.1" width="1.6" height="1.5" fill="#333"/><rect x="3.3" y="10.6" width="1.6" height="1.5" fill="#333"/><rect x="6.2" y="10.6" width="1.6" height="1.5" fill="#333"/></svg>
<div class="t" style="left:589.3px;top:295.9px;font-size:11.1px;color:#1a1a1a">03.11.2016</div>
<div class="t" style="left:450px;top:325.0px;font-size:11.5px;color:#333">Fälligkeitsdatum</div>
<div class="a" style="left:584.3px;top:317.8px;width:267.6px;height:24.5px;background:#fff;border:1px solid #acacac"></div>
<div class="a" style="left:827.9px;top:317.8px;width:1px;height:24.5px;background:#acacac"></div>
<svg style="left:832.9px;top:322.8px" width="14" height="14"><rect x="1" y="1.5" width="12" height="11.5" rx="2" fill="#fff" stroke="#333" stroke-width="1.3"/><rect x="1" y="1.5" width="12" height="2.6" fill="#333"/><rect x="3.3" y="5.6" width="1.6" height="1.5" fill="#333"/><rect x="6.2" y="5.6" width="1.6" height="1.5" fill="#333"/><rect x="9.1" y="5.6" width="1.6" height="1.5" fill="#333"/><rect x="3.3" y="8.1" width="1.6" height="1.5" fill="#333"/><rect x="6.2" y="8.1" width="1.6" height="1.5" fill="#333"/><rect x="9.1" y="8.1" width="1.6" height="1.5" fill="#333"/><rect x="3.3" y="10.6" width="1.6" height="1.5" fill="#333"/><rect x="6.2" y="10.6" width="1.6" height="1.5" fill="#333"/></svg>
<div class="t" style="left:589.3px;top:325.7px;font-size:11.1px;color:#1a1a1a">03.11.2016</div>
<div class="t" style="left:450px;top:354.59999999999997px;font-size:11.5px;color:#333">Gemeindenr</div>
<div class="a" style="left:584.3px;top:347.4px;width:267.6px;height:24.5px;background:#fff;border:1px solid #acacac"></div>
<div class="a" style="left:827.9px;top:347.4px;width:1px;height:24.5px;background:#acacac"></div>
<svg style="left:832.9px;top:351.9px" width="14" height="14"><circle cx="5.3" cy="5.3" r="3.6" fill="none" stroke="#333" stroke-width="1.5"/><path d="M8 8 L11.6 11.6" stroke="#333" stroke-width="1.7"/></svg>
<div class="t" style="left:589.3px;top:355.29999999999995px;font-size:11.1px;color:#1a1a1a">01</div>
<div class="t" style="left:450px;top:384.3px;font-size:11.5px;color:#333">Zahlungsbedingung</div>
<div class="a" style="left:584.3px;top:377.1px;width:267.6px;height:24.5px;background:#fff;border:1px solid #acacac"></div>
<div class="a" style="left:827.9px;top:377.1px;width:1px;height:24.5px;background:#acacac"></div>
<svg style="left:832.9px;top:381.6px" width="14" height="14"><circle cx="5.3" cy="5.3" r="3.6" fill="none" stroke="#333" stroke-width="1.5"/><path d="M8 8 L11.6 11.6" stroke="#333" stroke-width="1.7"/></svg>
<div class="t" style="left:450px;top:414.0px;font-size:11.5px;color:#333">Belegnummer</div>
<div class="a" style="left:584.3px;top:406.8px;width:267.6px;height:24.5px;background:#fff;border:1px solid #acacac"></div>
<div class="t" style="left:589.3px;top:414.7px;font-size:11.1px;color:#1a1a1a">699785</div>
<div class="t" style="left:450px;top:443.59999999999997px;font-size:11.5px;color:#333">Buchungsbeschreibung</div>
<div class="a" style="left:584.3px;top:436.4px;width:267.6px;height:24.5px;background:#fff;border:1px solid #acacac"></div>
<div class="t" style="left:589.3px;top:444.29999999999995px;font-size:11.1px;color:#1a1a1a">Rechnung KWF0000238</div>
<div class="t" style="left:450px;top:473.2px;font-size:11.5px;color:#333">Erw. Belegtext</div>
<div class="a" style="left:584.3px;top:466px;width:267.6px;height:24.5px;background:#fff;border:1px solid #acacac"></div>
<div class="t" style="left:589.3px;top:473.9px;font-size:11.1px;color:#1a1a1a">Rechnung Nr.&nbsp; vom ,</div>
<div class="t" style="left:450px;top:502.8px;font-size:11.5px;color:#333">Reservierte Mittel</div>
<div class="a" style="left:584.3px;top:495.6px;width:267.6px;height:24.5px;background:#cbcbcb;border:1px solid #b3b3b3"></div>
<div class="t" style="left:584.3px;width:261.6px;text-align:right;top:503.5px;font-size:11.1px;color:#1a1a1a">0,00 €</div>
<div class="a" style="left:10px;top:573.3px;width:852px;height:23.3px;background:#2a6db6"></div>
<div class="t" style="left:19px;top:580.7px;font-size:11px;color:#fff;transform:scaleX(0.885);transform-origin:0 0">ZEILENDATEN</div>
<div class="t" style="left:94.8px;top:580.7px;font-size:11px;color:#fff;transform:scaleX(0.885);transform-origin:0 0">(1)</div>
<svg style="left:843.5px;top:581.5999999999999px" width="10" height="8"><path d="M0.5 7.5 L4.75 0.5 L9 7.5 Z" fill="#fff"/></svg>
<div class="a" style="left:10px;top:596.3px;width:851px;height:69.5px;border:1px solid #c9c9c9;border-top:none;background:#fff"></div>
<div class="a" style="left:11px;top:596.3px;width:849px;height:30px;background:#efefef"></div>
<div class="a" style="left:11px;top:649px;width:849px;height:16px;background:#ececec"></div>
<div class="a" style="left:42.7px;top:650.2px;width:307px;height:12.5px;background:#c9c9c9"></div>
<svg style="left:26px;top:651px" width="12" height="12"><path d="M8 1.5 L3 6 L8 10.5" stroke="#333" stroke-width="2" fill="none"/></svg>
<svg style="left:821px;top:651.5px" width="12" height="12"><path d="M2 1.5 L7 6 L2 10.5" stroke="#333" stroke-width="2" fill="none"/></svg>
<div class="a" style="left:180px;top:626.5px;width:143px;height:22.5px;background:#bebebe"></div>
<div class="a" style="left:428.2px;top:626.5px;width:143px;height:22.5px;background:#bebebe"></div>
<div class="a" style="left:93.9px;top:598px;width:1.4px;height:28px;background:#cfcfcf"></div>
<div class="a" style="left:179.0px;top:598px;width:1.4px;height:28px;background:#cfcfcf"></div>
<div class="a" style="left:323.9px;top:598px;width:1.4px;height:28px;background:#cfcfcf"></div>
<div class="a" style="left:427.4px;top:598px;width:1.4px;height:28px;background:#cfcfcf"></div>
<div class="a" style="left:571.3px;top:598px;width:1.4px;height:28px;background:#cfcfcf"></div>
<div class="a" style="left:715.1px;top:598px;width:1.4px;height:28px;background:#cfcfcf"></div>
<div class="t" style="left:18.5px;top:607px;font-size:11.5px;color:#222">Art</div>
<svg style="left:81.2px;top:609.5px" width="9" height="6"><path d="M0.5 0.8 L4 4.5 L7.5 0.8" stroke="#666" stroke-width="1" fill="none"/></svg>
<div class="t" style="left:101px;top:607px;font-size:11.5px;color:#222">Nummer</div>
<svg style="left:163.5px;top:609.5px" width="9" height="6"><path d="M0.5 0.8 L4 4.5 L7.5 0.8" stroke="#666" stroke-width="1" fill="none"/></svg>
<div class="t" style="left:186.7px;top:607px;font-size:11.5px;color:#222">Kontobez.</div>
<svg style="left:310.5px;top:609.5px" width="9" height="6"><path d="M0.5 0.8 L4 4.5 L7.5 0.8" stroke="#666" stroke-width="1" fill="none"/></svg>
<div class="t" style="left:331px;top:607px;font-size:11.5px;color:#222">Kostenstelle</div>
<svg style="left:414.1px;top:609.5px" width="9" height="6"><path d="M0.5 0.8 L4 4.5 L7.5 0.8" stroke="#666" stroke-width="1" fill="none"/></svg>
<div class="t" style="left:434.5px;top:607px;font-size:11.5px;color:#222">KST-Name</div>
<svg style="left:558.5px;top:609.5px" width="9" height="6"><path d="M0.5 0.8 L4 4.5 L7.5 0.8" stroke="#666" stroke-width="1" fill="none"/></svg>
<div class="t" style="left:578.6px;top:607px;font-size:11.5px;color:#222">Kostenträger</div>
<svg style="left:702.2px;top:609.5px" width="9" height="6"><path d="M0.5 0.8 L4 4.5 L7.5 0.8" stroke="#666" stroke-width="1" fill="none"/></svg>
<div class="t" style="left:722.6px;top:607px;font-size:11.5px;color:#222">Buchungstext</div>
<svg style="left:493.5px;top:607px" width="7" height="6"><path d="M0 5.5 L3 0.5 L6 5.5 Z" fill="#444"/></svg>
<div class="t" style="left:19px;top:632.7px;font-size:11.6px;color:#1a1a1a">Sachkonto</div>
<div class="t" style="left:101.5px;top:632.7px;font-size:11.6px;color:#1a1a1a">543101</div>
<div class="t" style="left:187px;top:632.7px;font-size:11.6px;color:#1a1a1a">Büromaterial</div>
<div class="t" style="left:331.5px;top:632.7px;font-size:11.6px;color:#1a1a1a">02.160.00.00</div>
<div class="t" style="left:435px;top:632.7px;font-size:11.6px;color:#1a1a1a">DV-Service</div>
<div class="t" style="left:579px;top:632.7px;font-size:11.6px;color:#1a1a1a">01.160.01</div>
<div class="t" style="left:723px;top:632.7px;font-size:11.6px;color:#1a1a1a">Büromaterial</div>
<svg style="left:847px;top:628px" width="11" height="19"><path d="M1.5 6 L5 2.5 L8.5 6 M1.5 13 L5 16.5 L8.5 13" stroke="#b5b5b5" stroke-width="1" fill="none"/></svg>
<div class="a" style="left:10px;top:675.3px;width:852px;height:21.7px;background:#2a6db6"></div>
<div class="t" style="left:19px;top:681.5px;font-size:11px;color:#fff;transform:scaleX(0.885);transform-origin:0 0">LUGM-ZEILEN</div>
<div class="t" style="left:94.8px;top:681.5px;font-size:11px;color:#fff;transform:scaleX(0.885);transform-origin:0 0">(0)</div>
<svg style="left:843.5px;top:683.5999999999999px" width="10" height="8"><path d="M0.5 0.5 L4.75 7.5 L9 0.5 Z" fill="#fff"/></svg>
<div class="a" style="left:10px;top:708.3px;width:852px;height:21.7px;background:#2a6db6"></div>
<div class="t" style="left:19px;top:714.2px;font-size:11px;color:#fff;transform:scaleX(0.885);transform-origin:0 0">FAKTURIERUNG</div>
<svg style="left:843.5px;top:716.5999999999999px" width="10" height="8"><path d="M0.5 0.5 L4.75 7.5 L9 0.5 Z" fill="#fff"/></svg>
<div class="a" style="left:10px;top:740.8px;width:852px;height:21.7px;background:#2a6db6"></div>
<div class="t" style="left:19px;top:747px;font-size:11px;color:#fff;transform:scaleX(0.885);transform-origin:0 0">ZAHLUNG</div>
<svg style="left:843.5px;top:749.0999999999999px" width="10" height="8"><path d="M0.5 0.5 L4.75 7.5 L9 0.5 Z" fill="#fff"/></svg>

<!-- PREVIEW -->
<div class="a" style="left:871.8px;top:247px;width:13.6px;height:503.6px;background:#efefef"></div>
<div class="a" style="left:871.8px;top:276px;width:13.6px;height:426px;background:#cdcdcd"></div>
<svg style="left:872px;top:255px" width="14" height="10"><path d="M2.5 7.5 L7 3 L11.5 7.5" stroke="#333" stroke-width="1.8" fill="none"/></svg>
<svg style="left:872px;top:727px" width="14" height="10"><path d="M2.5 2.5 L7 7 L11.5 2.5" stroke="#333" stroke-width="1.8" fill="none"/></svg>
<div class="a" style="left:886.3px;top:246px;width:1px;height:506px;background:#c6c6c6"></div>
<div class="a" style="left:898.3px;top:246px;width:1px;height:506px;background:#c6c6c6"></div>
<svg style="left:888px;top:478px" width="10" height="48">
  <path d="M8.7 1.1 V9.1 L1.4 5.1 Z" fill="#444"/>
  <circle cx="4.5" cy="18.2" r="1.3" fill="#222"/><circle cx="4.5" cy="23.3" r="1.3" fill="#222"/><circle cx="4.5" cy="28.5" r="1.3" fill="#222"/>
  <path d="M1.4 38.6 V46.9 L8.7 42.75 Z" fill="#444"/>
</svg>
<div class="a" style="left:908.3px;top:255px;width:509px;height:23px;background:#2a6db6"></div>
<div class="t" style="left:917px;top:262.4px;font-size:11px;color:#fff;transform:scaleX(0.905);transform-origin:0 0">VORSCHAU: HAUPTDOKUMENT</div>
<svg style="left:1355px;top:259px" width="60" height="16">
  <path d="M5.5 4 A4.2 4.2 0 1 1 4.8 10.8" stroke="#fff" stroke-width="1.6" fill="none"/>
  <path d="M3 1.5 V6.5 H8" stroke="#fff" stroke-width="1.6" fill="none"/>
  <rect x="25.5" y="3.5" width="6" height="6" fill="none" stroke="#fff" stroke-width="1.2"/>
  <rect x="28.5" y="6.5" width="6" height="5.8" fill="#2a6db6" stroke="#fff" stroke-width="1.2"/>
  <path d="M45 11 L49 4 L53 11 Z" fill="#fff"/>
</svg>
<div class="a" style="left:908.3px;top:278px;width:509px;height:474px;background:#3f3f3f"></div>
<div class="a" style="left:908.3px;top:278px;width:509px;height:29.5px;background:#484848;border-bottom:1px solid #363636"></div>
<svg style="left:908px;top:278px" width="510" height="30">
  <rect x="12" y="9.9" width="12" height="11.5" fill="none" stroke="#fff" stroke-width="1.5"/>
  <path d="M16 10 V21" stroke="#fff" stroke-width="1.5"/><rect x="13" y="11" width="3" height="9.5" fill="#bbb"/>
  <path d="M48.5 9 L42 15 H46 V21 H51 V15 H55 Z" fill="#9a9a9a"/>
  <path d="M62.3 9 V22" stroke="#2e2e2e" stroke-width="1"/>
  <path d="M76.5 21 L70 15 H74 V9 H79 V15 H83 Z" fill="#9a9a9a"/>
  <rect x="130.2" y="4.8" width="47" height="20.5" rx="1.5" fill="#5b5b5b" stroke="#3a3a3a" stroke-width="1"/>
  <rect x="244.5" y="4.6" width="27" height="20.6" rx="1.5" fill="#3d3d3d" stroke="#333" stroke-width="1"/>
  <path d="M252.5 15.2 H263.5" stroke="#fff" stroke-width="1.8"/>
  <path d="M281.3 15.2 H291.7 M286.5 10 V20.4" stroke="#fff" stroke-width="1.8"/>
  <rect x="303" y="4.6" width="132.3" height="20.6" rx="1.5" fill="#444" stroke="#333" stroke-width="1"/>
  <path d="M422.5 12.8 L424.8 10 L427 12.8 Z M422.5 17.5 L424.8 20.3 L427 17.5 Z" fill="#ddd"/>
  <path d="M485 10.5 L489.5 15.2 L485 19.9 M491 10.5 L495.5 15.2 L491 19.9" stroke="#fff" stroke-width="2.2" fill="none"/>
</svg>
<div class="t" style="left:1003.5px;top:288px;font-size:10px;color:#e6e6e6">Seite:</div>
<div class="t" style="left:1060px;width:21px;text-align:right;top:288px;font-size:11px;color:#eee">1</div>
<div class="t" style="left:1088.5px;top:288px;font-size:10.6px;color:#e6e6e6">von 1</div>
<div class="t" style="left:1214.7px;top:289px;font-size:10.3px;color:#eee">60%</div>
<!-- page -->
<div class="a" style="left:948px;top:316.3px;width:429.3px;height:436px;background:#fff"></div>
<svg style="left:975px;top:342px" width="378" height="62">
  <defs>
    <pattern id="dith" width="3" height="3" patternUnits="userSpaceOnUse">
      <rect width="3" height="3" fill="#8a8a8a"/><rect x="0" y="0" width="1" height="1" fill="#c8c8c8"/><rect x="2" y="1" width="1" height="1" fill="#505050"/><rect x="1" y="2" width="1" height="1" fill="#a8a8a8"/>
    </pattern>
    <pattern id="dith2" width="3" height="3" patternUnits="userSpaceOnUse">
      <rect width="3" height="3" fill="#505050"/><rect x="0" y="0" width="1" height="1" fill="#8a8a8a"/><rect x="2" y="1" width="1" height="1" fill="#2a2a2a"/><rect x="1" y="2" width="1" height="1" fill="#707070"/>
    </pattern>
  </defs>
  <rect x="0" y="0" width="133" height="61" fill="url(#dith)"/>
  <path d="M133 0 H187 L210 16 H378 V48 H315 L286 61 H133 Z" fill="url(#dith2)"/>
  <path d="M188 1.5 H378 M192 4.7 H378 M197 7.9 H378 M202 11.1 H378 M207 14.3 H378" stroke="#444" stroke-width="1.4"/>
  <rect x="7" y="22" width="119" height="21" rx="6" fill="none" stroke="#fff" stroke-width="2" transform="skewX(-8) translate(4 0)"/>
  <text x="12" y="40" font-family="Liberation Sans" font-style="italic" font-weight="bold" font-size="24" fill="#fff" textLength="106" lengthAdjust="spacingAndGlyphs">maus</text>
  <circle cx="126" cy="17" r="3" fill="none" stroke="#fff" stroke-width="0.8"/>
  <path d="M263 16 L275 18 L287 36 L280 43 L265 28 Z" fill="#b8b8b8" stroke="#fff" stroke-width="1"/>
  <circle cx="268" cy="11" r="4" fill="#ddd" stroke="#fff" stroke-width="0.8"/>
  <path d="M261 23 L245 56" stroke="#fff" stroke-width="2"/>
  <ellipse cx="246" cy="57" rx="6" ry="3" fill="#e0e0e0"/>
  <path d="M275 38 L273 53 M283 38 L293 50" stroke="#fff" stroke-width="1.8"/>
  <ellipse cx="290" cy="55" rx="13" ry="4" fill="#333" stroke="#ddd" stroke-width="1"/>
</svg>
<div class="t" style="left:1200px;width:153px;text-align:right;top:421px;font-size:14.3px;font-weight:bold;color:#666">RECHNUNG</div>
<div class="t" style="left:972.4px;top:439px;font-size:7.39px;font-style:italic;color:#111;text-decoration:underline">EDV Zubehör Maus - Tannenplatz 5 - 35500 Unserestadt</div>
<div class="a" style="left:972.4px;top:458.5px;font-size:7.3px;line-height:9.3px;color:#111;white-space:nowrap;-webkit-text-stroke:0.25px currentColor">Stadtverwaltung<br>Unserestadt<br>Unsere Strasse 3</div>
<div class="t" style="left:972.4px;top:498.5px;font-size:7.17px;color:#111">35500 Unserestadt</div>
<div class="a" style="left:1153px;width:200px;text-align:right;top:447px;font-size:6.4px;line-height:9.4px;font-weight:bold;color:#111;white-space:nowrap">EDV ZUBEHÖR<br>HEINRICH MAUS<br>TANNENPLATZ 3<br>35500 UNSERESTADT</div>
<div class="a" style="left:1153px;width:200px;text-align:right;top:494.5px;font-size:6.4px;line-height:9.75px;font-weight:bold;color:#111;white-space:nowrap">TELEFON: 07332/ 937130<br>TELEFAX: 07332/ 937140<br>BANK: SPARKASSE ULM<br>BIC/SWIFT PBNKDEFFXXX<br>IBAN DE18100100100004545454</div>
<div class="t" style="left:972.4px;top:557.5px;font-size:6.7px;font-weight:bold;color:#111">RECHNUNGSDATEN:</div>
<div class="a" style="left:972.4px;top:567.6px;font-size:7.2px;line-height:10px;color:#111;white-space:nowrap;-webkit-text-stroke:0.25px currentColor">Rechnungsnummer:<br>Datum:<br>Kundennummer:</div>
<div class="a" style="left:1045.9px;top:567.6px;font-size:7.2px;line-height:10px;color:#111;white-space:nowrap;-webkit-text-stroke:0.25px currentColor">699785<br>15.01.2016<br>10011</div>
<div class="t" style="left:1167.1px;top:557.5px;font-size:6.7px;font-weight:bold;color:#111">BESTELLDATEN:</div>
<div class="a" style="left:1167.1px;top:567.6px;font-size:7.2px;line-height:10px;color:#111;white-space:nowrap;-webkit-text-stroke:0.25px currentColor">Bestellnummer:<br>Bestelldatum:<br>Ihr Zeichen:</div>
<div class="a" style="left:1225px;top:567.6px;font-size:7.2px;line-height:10px;color:#111;white-space:nowrap;-webkit-text-stroke:0.25px currentColor">telefonisch<br>13.01.2016<br>Herr Otto</div>
<div class="t" style="left:972.4px;top:609.7px;font-size:6.81px;font-weight:bold;color:#111">ANMERKUNGEN ODER BESONDERE ANWEISUNGEN:</div>
<svg style="left:960px;top:645px" width="410" height="100">
  <path d="M8.5 6.2 H397.7" stroke="#222" stroke-width="1.6"/>
  <path d="M8.5 6 V48.4 H397.7 V6 M8.5 20 H397.7 M8.5 34.2 H397.7 M44.9 6 V48.4 M294 6 V48.4 M346.4 6 V90.9 M397.7 48.4 V90.9 H346.4 M346.4 62.2 H397.7 M346.4 75.8 H397.7" stroke="#777" stroke-width="0.9" fill="none"/>
</svg>
<div class="t" style="left:968px;width:37px;text-align:center;top:654.8px;font-size:6.2px;font-weight:bold;color:#111">MENGE</div>
<div class="t" style="left:1005px;width:249px;text-align:center;top:654.8px;font-size:6.2px;font-weight:bold;color:#111">BESCHREIBUNG</div>
<div class="t" style="left:1254px;width:52px;text-align:center;top:654.8px;font-size:6.2px;font-weight:bold;color:#111">STÜCKPREIS</div>
<div class="t" style="left:1306px;width:52px;text-align:center;top:654.8px;font-size:6.2px;font-weight:bold;color:#111">SUMME</div>
<div class="t" style="left:972px;top:668.5px;font-size:7.2px;color:#111">10</div>
<div class="t" style="left:972px;top:682.5px;font-size:7.2px;color:#111">1</div>
<div class="t" style="left:1013px;top:668.5px;font-size:7.2px;color:#111">Mousepads</div>
<div class="t" style="left:1013px;top:682.5px;font-size:7.2px;color:#111">Toner für HP Laserjet 2100</div>
<div class="a" style="left:1200px;width:100px;text-align:right;top:664.5px;font-size:7.2px;line-height:14.2px;color:#111;white-space:nowrap;-webkit-text-stroke:0.25px currentColor">6,99<br>58,00</div>
<div class="a" style="left:1252px;width:100px;text-align:right;top:664.5px;font-size:7.2px;line-height:14.2px;color:#111;white-space:nowrap;-webkit-text-stroke:0.25px currentColor">69,90<br>58,00<br>107,48<br>20,42<br>127,90</div>
<div class="a" style="left:1100px;width:200px;text-align:right;top:693.2px;font-size:6.1px;line-height:13.9px;font-weight:bold;color:#111;white-space:nowrap">ZWISCHENSUMME<br>UMSATZSTEUER 19%<br>FÄLLIGER BETRAG</div>
<div class="t" style="left:972.4px;top:741px;font-size:7.5px;color:#111">Das Rechnungsdatum entspricht dem Lieferdatum</div>

<!-- STATUS BAR -->
<div class="a" style="left:0;top:752px;width:1426px;height:21px;background:#fff;border-top:1px solid #b9b9b9"></div>
<div class="a" style="left:0;top:773px;width:1426px;height:2px;background:#555"></div>
<svg style="left:1361px;top:755px" width="65" height="16">
  <circle cx="5.5" cy="6" r="4.3" fill="#cfe0f5" stroke="#3a6fb0" stroke-width="1.2"/>
  <path d="M3.3 6 H7.7 M5.5 3.8 V8.2" stroke="#2a5fa0" stroke-width="1.2"/>
  <path d="M8.6 9.3 L11.5 12.3" stroke="#333" stroke-width="2"/>
  <path d="M54.5 5.5 H60.5 L57.5 8.8 Z" fill="#222"/>
</svg>
<div class="t" style="left:1375.8px;top:757.5px;font-size:10.2px;color:#222">100%</div>

</body></html>
